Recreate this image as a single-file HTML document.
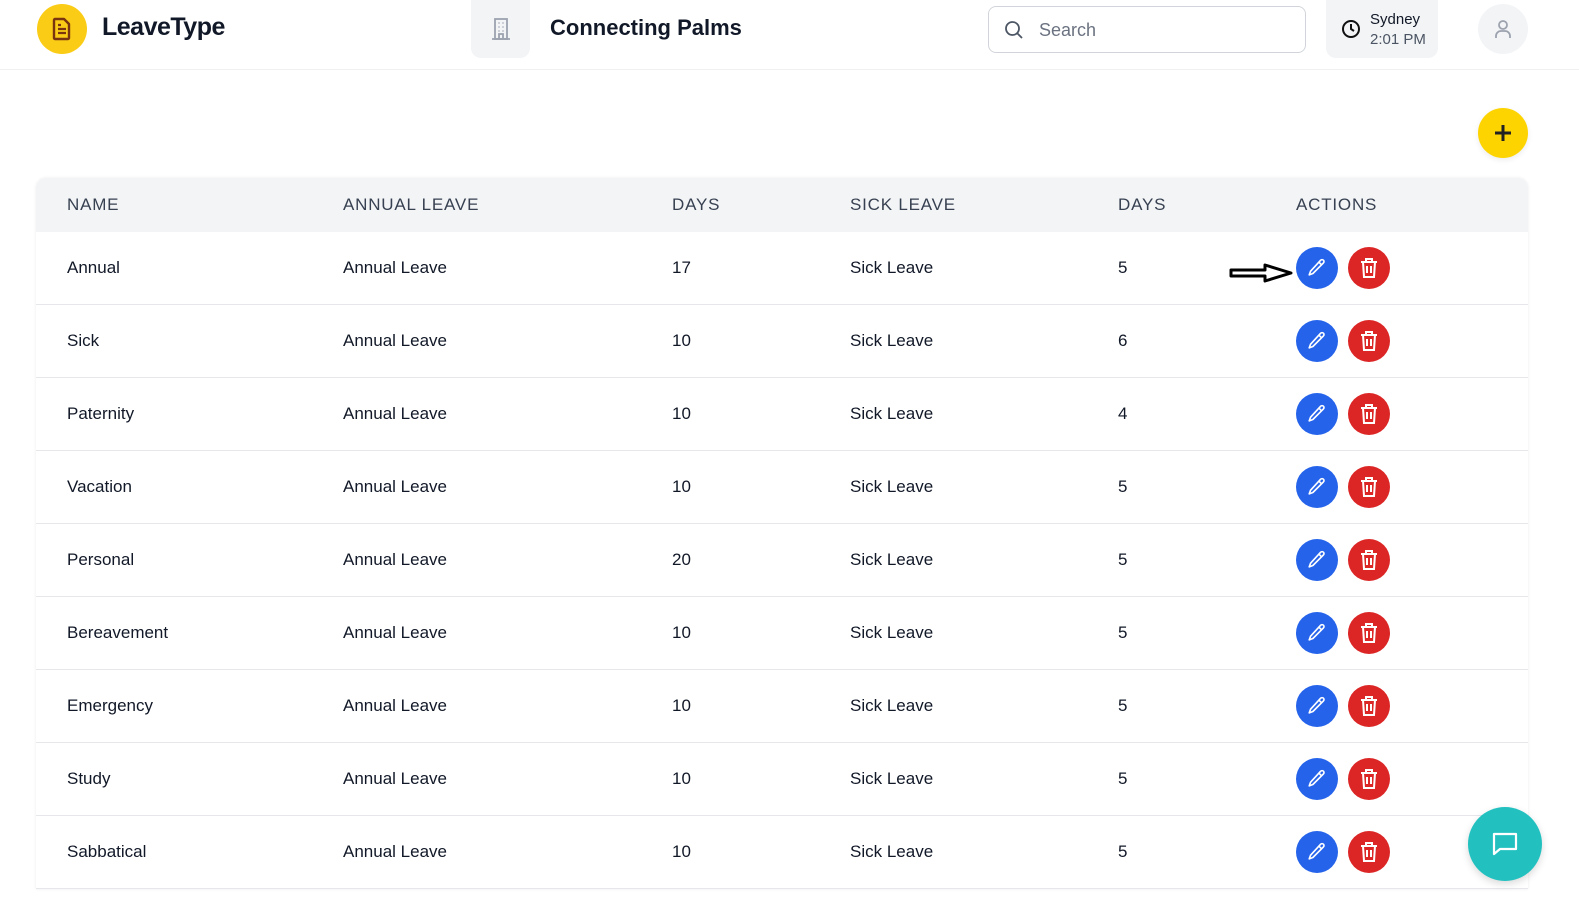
<!DOCTYPE html>
<html><head><meta charset="utf-8"><style>
*{box-sizing:border-box;margin:0;padding:0}
body{width:1579px;height:906px;overflow:hidden;background:#fff;font-family:"Liberation Sans",sans-serif;color:#111827;position:relative}
.hdr{position:absolute;left:0;top:0;width:1579px;height:70px;border-bottom:1px solid #f0f0f0}
.abs{position:absolute}
.logo{left:37px;top:4px;width:50px;height:50px;border-radius:50%;background:#facc15;display:flex;align-items:center;justify-content:center}
.title{left:102px;top:13px;font-size:25px;font-weight:bold;letter-spacing:-0.5px}
.bld{left:471px;top:0;width:59px;height:58px;border-radius:0 0 10px 10px;background:#f3f4f6;display:flex;align-items:center;justify-content:center}
.org{left:550px;top:15px;font-size:22px;font-weight:bold}
.search{left:988px;top:6px;width:318px;height:47px;border:1px solid #d1d5db;border-radius:8px}
.search span{position:absolute;left:50px;top:13px;font-size:18px;color:#6b7280}
.clock{left:1326px;top:0;width:112px;height:58px;background:#f3f4f6;border-radius:0 0 10px 10px}
.avatar{left:1478px;top:4px;width:50px;height:50px;border-radius:50%;background:#f3f4f6;display:flex;align-items:center;justify-content:center}
.plus{left:1478px;top:108px;width:50px;height:50px;border-radius:50%;background:#fdd400;display:flex;align-items:center;justify-content:center;box-shadow:0 2px 6px rgba(0,0,0,.08)}
.tbl{position:absolute;left:36px;top:178px;width:1492px;border-radius:10px 10px 0 0;overflow:hidden;box-shadow:0 0 3px rgba(0,0,0,.08)}
.th{height:54px;background:#f3f4f6;position:relative;font-size:17px;color:#374151;letter-spacing:0.8px}
.row{height:73px;position:relative;border-bottom:1px solid #e5e7eb;font-size:17px;background:#fff}
.c{position:absolute;top:50%;transform:translateY(-50%)}
.c1{left:31px}.c2{left:307px}.c3{left:636px}.c4{left:814px}.c5{left:1082px}.c6{left:1260px}
.btn{position:absolute;top:50%;margin-top:-21px;width:42px;height:42px;border-radius:50%;display:flex;align-items:center;justify-content:center}
.e{left:1260px;background:#2563eb}.d{left:1312px;background:#dc2626}
.chat{left:1468px;top:807px;width:74px;height:74px;border-radius:50%;background:#22c1c0;display:flex;align-items:center;justify-content:center;box-shadow:0 3px 8px rgba(0,0,0,.15)}
</style></head><body>
<div class="hdr"></div>
<div class="abs logo"><svg width="24" height="26" viewBox="0 0 24 26"><path d="M5 3h9l5 5v14a1 1 0 0 1-1 1H5a1 1 0 0 1-1-1V4a1 1 0 0 1 1-1z" fill="none" stroke="#78350f" stroke-width="2.4" stroke-linejoin="round"/><path d="M8 9h3M8 13h8M8 17h8" stroke="#78350f" stroke-width="2.2"/></svg></div>
<div class="abs title">LeaveType</div>
<div class="abs bld"><svg width="24" height="26" viewBox="0 0 24 26" fill="none" stroke="#9ca3af" stroke-width="1.8"><rect x="6" y="3" width="12" height="20"/><path d="M3 23h18M10 23v-5h4v5"/><path d="M9.5 7h1M13.5 7h1M9.5 11h1M13.5 11h1M9.5 15h1M13.5 15h1"/></svg></div>
<div class="abs org">Connecting Palms</div>
<div class="abs search"><svg style="position:absolute;left:15px;top:13px" width="20" height="20" viewBox="0 0 20 20" fill="none" stroke="#4b5563" stroke-width="1.8"><circle cx="8.5" cy="8.5" r="6.5"/><path d="M13.5 13.5l4.5 4.5"/></svg><span>Search</span></div>
<div class="abs clock"><svg style="position:absolute;left:15px;top:19px" width="20" height="20" viewBox="0 0 20 20" fill="none" stroke="#111" stroke-width="2"><circle cx="10" cy="10" r="8"/><path d="M10 5v5l3 2"/></svg><div style="position:absolute;left:44px;top:11px;font-size:15px">Sydney</div><div style="position:absolute;left:44px;top:31px;font-size:15px;color:#4b5563">2:01 PM</div></div>
<div class="abs avatar"><svg width="22" height="22" viewBox="0 0 22 22" fill="none" stroke="#9ca3af" stroke-width="1.8"><circle cx="11" cy="7" r="4"/><path d="M4 20v-2a5 5 0 0 1 5-5h4a5 5 0 0 1 5 5v2"/></svg></div>
<div class="abs plus"><svg width="20" height="20" viewBox="0 0 20 20" stroke="#222" stroke-width="3"><path d="M10 2v16M2 10h16"/></svg></div>
<div class="tbl">
<div class="th"><span class="c c1">NAME</span><span class="c c2">ANNUAL LEAVE</span><span class="c c3">DAYS</span><span class="c c4">SICK LEAVE</span><span class="c c5">DAYS</span><span class="c c6">ACTIONS</span></div>
<div id="rows"></div>
</div>
<svg class="abs" style="left:1228px;top:262px" width="66" height="22" viewBox="0 0 66 22"><path d="M3 8h34V3l26 8-26 8v-5H3z" fill="none" stroke="#000" stroke-width="3" stroke-linejoin="round"/></svg>
<div class="abs chat"><svg width="30" height="30" viewBox="0 0 30 30" fill="none" stroke="#fff" stroke-width="2.2" stroke-linejoin="round"><path d="M4 5h22v15H10l-6 5z"/></svg></div>
<script>
var d=[["Annual",17,5],["Sick",10,6],["Paternity",10,4],["Vacation",10,5],["Personal",20,5],["Bereavement",10,5],["Emergency",10,5],["Study",10,5],["Sabbatical",10,5]];
var pen='<svg width="22" height="22" viewBox="0 0 24 24" fill="none" stroke="#fff" stroke-width="1.8" stroke-linejoin="round"><path d="M16 3.5a2.1 2.1 0 0 1 3 3L7.5 18 3.5 19.5 5 15.5z"/><path d="M14 5.5l3 3"/></svg>';
var bin='<svg width="20" height="22" viewBox="0 0 20 22" fill="none" stroke="#fff" stroke-width="2"><path d="M2 5h16M7 5V2h6v3M4 5l1 15h10l1-15M8 9v7M12 9v7"/></svg>';
var h='';d.forEach(function(r){h+='<div class="row"><span class="c c1">'+r[0]+'</span><span class="c c2">Annual Leave</span><span class="c c3">'+r[1]+'</span><span class="c c4">Sick Leave</span><span class="c c5">'+r[2]+'</span><div class="btn e">'+pen+'</div><div class="btn d">'+bin+'</div></div>'});
document.getElementById('rows').innerHTML=h;
</script>
</body></html>
